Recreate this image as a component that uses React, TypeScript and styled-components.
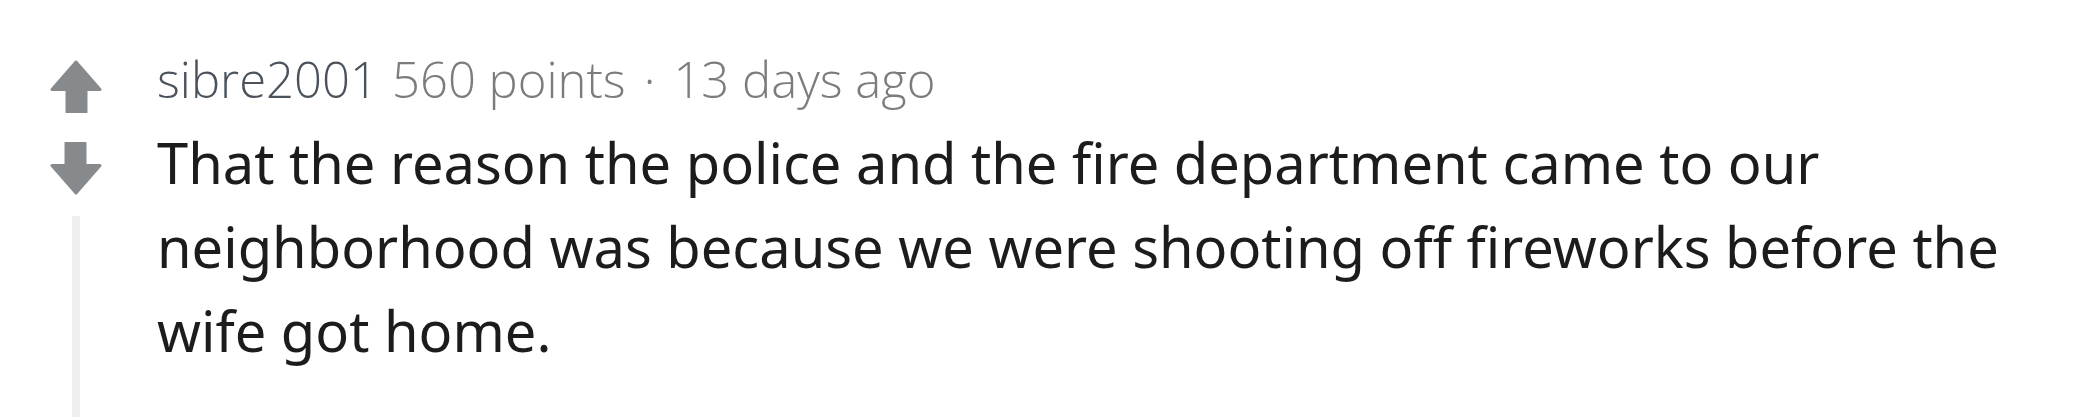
import React, { FC } from 'react'
import styled, { createGlobalStyle } from 'styled-components'

const GlobalStyle = createGlobalStyle`
  html, body {
    margin: 0;
    padding: 0;
    background-color: #fff;
  }
`

const StyledComment = styled.div`
  display: flex;
  min-height: 100vh;
  box-sizing: border-box;
  padding: 38px 0 0 50px;
  overflow: hidden;
`

const VoteColumn = styled.div`
  display: flex;
  flex-direction: column;
  align-items: center;
  width: 52px;
  flex-shrink: 0;
  padding-top: 22px;
`

const VoteButton = styled.button`
  padding: 0;
  border: none;
  background-color: transparent;
  width: 52px;
  height: 53px;
  cursor: pointer;
  display: block;
  margin-bottom: ${({ $spacing }: { $spacing?: number }) => $spacing || 0}px;

  svg {
    display: block;
  }
`

const ThreadLine = styled.div`
  flex: 1;
  width: 8px;
  background-color: #edeff1;
`

const Body = styled.div`
  flex: 1;
  margin-left: 55px;
  min-width: 0;
`

const Meta = styled.div`
  font-family: 'Open Sans', 'Noto Sans', sans-serif;
  font-weight: 350;
  font-size: 49px;
  line-height: 82px;
  color: #7c7c7c;
  white-space: nowrap;
`

const Author = styled.a`
  color: #4a525c;
  text-decoration: none;
  margin-right: 14px;
`

const Dot = styled.span`
  margin: 0 18px;
`

const Text = styled.p`
  margin: 0;
  font-family: 'Noto Sans', sans-serif;
  font-size: 56px;
  line-height: 84px;
  color: #1c1c1c;
  max-width: 1880px;
`

const ArrowIcon: FC<{ down?: boolean }> = ({ down }) => (
  <svg
    width="52"
    height="53"
    viewBox="0 0 52 53"
    style={down ? { transform: 'rotate(180deg)' } : undefined}
  >
    <path
      d="M26 2 L50 29.5 L36 29.5 L36 52 L17 52 L17 29.5 L2 29.5 Z"
      fill="#878a8c"
      stroke="#878a8c"
      strokeWidth="3"
      strokeLinejoin="round"
    />
  </svg>
)

const App: FC = () => (
  <>
    <GlobalStyle />
    <StyledComment>
      <VoteColumn>
        <VoteButton $spacing={29} aria-label="upvote">
          <ArrowIcon />
        </VoteButton>
        <VoteButton $spacing={21} aria-label="downvote">
          <ArrowIcon down />
        </VoteButton>
        <ThreadLine />
      </VoteColumn>
      <Body>
        <Meta>
          <Author href="#">sibre2001</Author>
          560 points<Dot>·</Dot>13 days ago
        </Meta>
        <Text>
          That the reason the police and the fire department came to our
          neighborhood was because we were shooting off fireworks before the
          wife got home.
        </Text>
      </Body>
    </StyledComment>
  </>
)

export default App
